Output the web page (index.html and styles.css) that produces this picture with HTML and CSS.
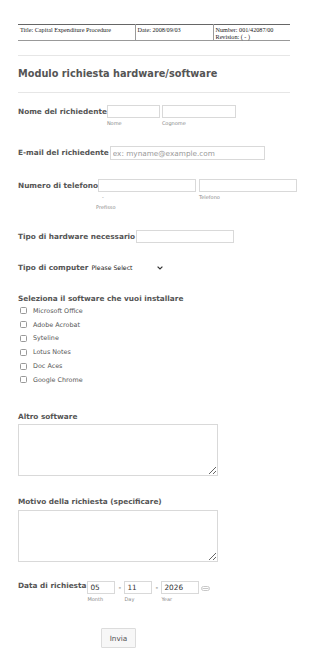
FILE: index.html
```html
<!DOCTYPE html>
<html lang="it">
<head>
<meta charset="utf-8">
<title>Modulo richiesta hardware/software</title>
<link rel="stylesheet" href="styles.css">
</head>
<body>
<div class="page">
  <table class="doc">
    <tr>
      <td class="c1">Title: Capital Expenditure Procedure</td>
      <td class="c2">Date: 2008/09/03</td>
      <td class="c3">Number: 001/42087/00<br>Revision: ( - )</td>
    </tr>
  </table>
  <div class="rule rule-top"></div>
  <h1 class="title">Modulo richiesta hardware/software</h1>
  <div class="rule"></div>

  <form class="form">
    <div class="q q-first">
      <label class="lbl">Nome del richiedente</label>
      <div class="fields">
        <div class="field"><input class="inp w-first" type="text"><span class="sub">Nome</span></div>
        <div class="field"><input class="inp w-last" type="text"><span class="sub">Cognome</span></div>
      </div>
    </div>

    <div class="q q-email">
      <label class="lbl">E-mail del richiedente</label>
      <div class="fields">
        <input class="inp inp-email w-email" type="text" placeholder="ex: myname@example.com">
      </div>
    </div>

    <div class="q q-phone">
      <label class="lbl">Numero di telefono</label>
      <div class="fields fields-phone">
        <div class="field"><input class="inp w-phone" type="text"><span class="sub sub-dash">-</span><span class="sub sub-pref">Prefisso</span></div>
        <div class="field"><input class="inp w-phone" type="text"><span class="sub">Telefono</span></div>
      </div>
    </div>

    <div class="q q-hw">
      <label class="lbl">Tipo di hardware necessario</label>
      <div class="fields">
        <input class="inp w-hw" type="text">
      </div>
    </div>

    <div class="q q-comp">
      <label class="lbl">Tipo di computer</label>
      <div class="select">
        <span>Please Select</span>
        <svg class="chev" width="6" height="4" viewBox="0 0 6 4"><path d="M0.6 0.6 L3 3 L5.4 0.6" fill="none" stroke="#333" stroke-width="1.2"/></svg>
      </div>
    </div>

    <div class="q q-check">
      <div class="lbl lbl-top">Seleziona il software che vuoi installare</div>
      <ul class="checks">
        <li><span class="box"></span>Microsoft Office</li>
        <li><span class="box"></span>Adobe Acrobat</li>
        <li><span class="box"></span>Syteline</li>
        <li><span class="box"></span>Lotus Notes</li>
        <li><span class="box"></span>Doc Aces</li>
        <li><span class="box"></span>Google Chrome</li>
      </ul>
    </div>

    <div class="q q-area1">
      <div class="lbl lbl-top">Altro software</div>
      <textarea class="area"></textarea>
    </div>

    <div class="q q-area2">
      <div class="lbl lbl-top">Motivo della richiesta (specificare)</div>
      <textarea class="area"></textarea>
    </div>

    <div class="q q-date">
      <label class="lbl lbl-date">Data di richiesta</label>
      <div class="fields date">
        <div class="field"><input class="inp dinp w-mm" type="text" value="05"><span class="sub">Month</span></div>
        <span class="dash">-</span>
        <div class="field"><input class="inp dinp w-dd" type="text" value="11"><span class="sub">Day</span></div>
        <span class="dash">-</span>
        <div class="field"><input class="inp dinp w-yy" type="text" value="2026"><span class="sub">Year</span></div>
        <svg class="cal" width="9" height="5" viewBox="0 0 9 5"><rect x="0.5" y="0.5" width="8" height="4" rx="2" fill="#fff" stroke="#c8c8c8"/><line x1="1.5" y1="2.5" x2="7.5" y2="2.5" stroke="#c8c8c8"/></svg>
      </div>
    </div>

    <div class="submit-row">
      <button type="button" class="btn">Invia</button>
    </div>
  </form>
</div>
</body>
</html>
```

FILE: styles.css
```css
html, body {
  margin: 0;
  padding: 0;
  background: #fff;
}
.page {
  padding: 24px 20px 0 18px;
  font-family: "DejaVu Sans", Verdana, sans-serif;
  color: #555;
}
.doc {
  width: 272px;
  border-collapse: collapse;
  border-top: 1px solid #666;
  border-bottom: 1px solid #999;
  font-family: "Liberation Serif", "Times New Roman", serif;
  font-size: 6.2px;
  line-height: 7px;
  color: #222;
}
.doc td {
  vertical-align: top;
  padding: 1px 2px 0 2px;
  height: 13px;
  box-sizing: border-box;
}
.doc .c1 { width: 117px; }
.doc .c2 { width: 78px; border-left: 1px solid #999; }
.doc .c3 { border-left: 1px solid #999; }

.rule {
  height: 1px;
  background: #e6e6e6;
  width: 272px;
}
.rule-top { margin-top: 14px; }
.title {
  margin: 13px 0 13px 0;
  font-size: 9.75px;
  line-height: 10px;
  font-weight: bold;
  color: #555;
}

.form { margin: 0; }
.q {
  display: flex;
  align-items: flex-start;
  margin-top: 19px;
}
.q-first { margin-top: 12px; }
.q-email { margin-top: 18px; }
.q-phone { margin-top: 19px; }
.q-hw { margin-top: 17px; }
.q-comp { margin-top: 18px; }
.lbl {
  font-size: 7.35px;
  font-weight: bold;
  line-height: 13px;
  color: #555;
  white-space: nowrap;
}
.fields {
  display: flex;
  align-items: flex-start;
}
.field {
  display: flex;
  flex-direction: column;
}
.fields .field + .field { margin-left: 2px; }
.fields-phone .field + .field { margin-left: 3px; }
.inp {
  box-sizing: border-box;
  height: 13px;
  margin: 0;
  padding: 0 2px;
  border: 1px solid #d9d9d9;
  background: #fff;
  font-family: "DejaVu Sans", Verdana, sans-serif;
  font-size: 7.3px;
  color: #333;
  outline: none;
}
.inp::placeholder { color: #999; }
.w-first { width: 53px; }
.w-last { width: 74px; }
.w-email { width: 155px; height: 14px; margin-left: 1px; }
.w-phone { width: 98px; }
.w-hw { width: 98px; margin-left: 1px; }
.sub {
  font-size: 5px;
  line-height: 9px;
  color: #888;
  margin-top: 1px;
}
.sub + .sub { margin-top: 0; }
.sub-dash { padding-left: 4px; }
.sub-pref { margin-left: -2px; line-height: 11px; }

.select {
  box-sizing: border-box;
  width: 77px;
  height: 13px;
  margin-left: 1px;
  display: flex;
  align-items: center;
  justify-content: space-between;
  padding: 0 3px 0 2px;
  font-size: 6.2px;
  color: #222;
  background: #fff;
}
.chev { display: block; }

.q-check {
  display: block;
  margin-top: 20px;
}
.lbl-top {
  line-height: 10px;
}
.checks {
  list-style: none;
  margin: 0;
  padding: 0;
}
.checks li {
  display: flex;
  align-items: center;
  height: 13.8px;
  font-size: 6.4px;
  color: #555;
}
.box {
  box-sizing: border-box;
  width: 7px;
  height: 7px;
  border: 1px solid #999;
  border-radius: 1.5px;
  margin: 0 6px 0 2px;
  background: #fff;
}

.q-area1 {
  display: block;
  margin-top: 25px;
}
.q-area2 {
  display: block;
  margin-top: 21px;
}
.area {
  display: block;
  box-sizing: border-box;
  width: 200px;
  height: 52px;
  margin: 2px 0 0 0;
  padding: 0;
  border: 1px solid #d9d9d9;
  resize: vertical;
  outline: none;
}
.q-area2 .area { margin-top: 3px; }

.q-date { margin-top: 19px; }
.lbl-date {
  line-height: 10px;
  margin-top: 0;
}
.date { margin-left: 1px; }
.dinp {
  font-size: 7.3px;
  color: #333;
  padding-left: 2px;
}
.w-mm { width: 28px; }
.w-dd { width: 28px; }
.w-yy { width: 38px; }
.dash {
  font-size: 7.5px;
  line-height: 13px;
  width: 9px;
  text-align: center;
  color: #444;
}
.cal {
  display: block;
  margin: 5px 0 0 2px;
}

.submit-row {
  padding: 22px 0 0 83px;
}
.btn {
  box-sizing: border-box;
  width: 35px;
  height: 20px;
  padding: 0;
  margin: 0;
  border: 1px solid #dcdcdc;
  border-radius: 1px;
  background: #f7f7f7;
  font-family: "DejaVu Sans", Verdana, sans-serif;
  font-size: 7.3px;
  color: #555;
}
```
